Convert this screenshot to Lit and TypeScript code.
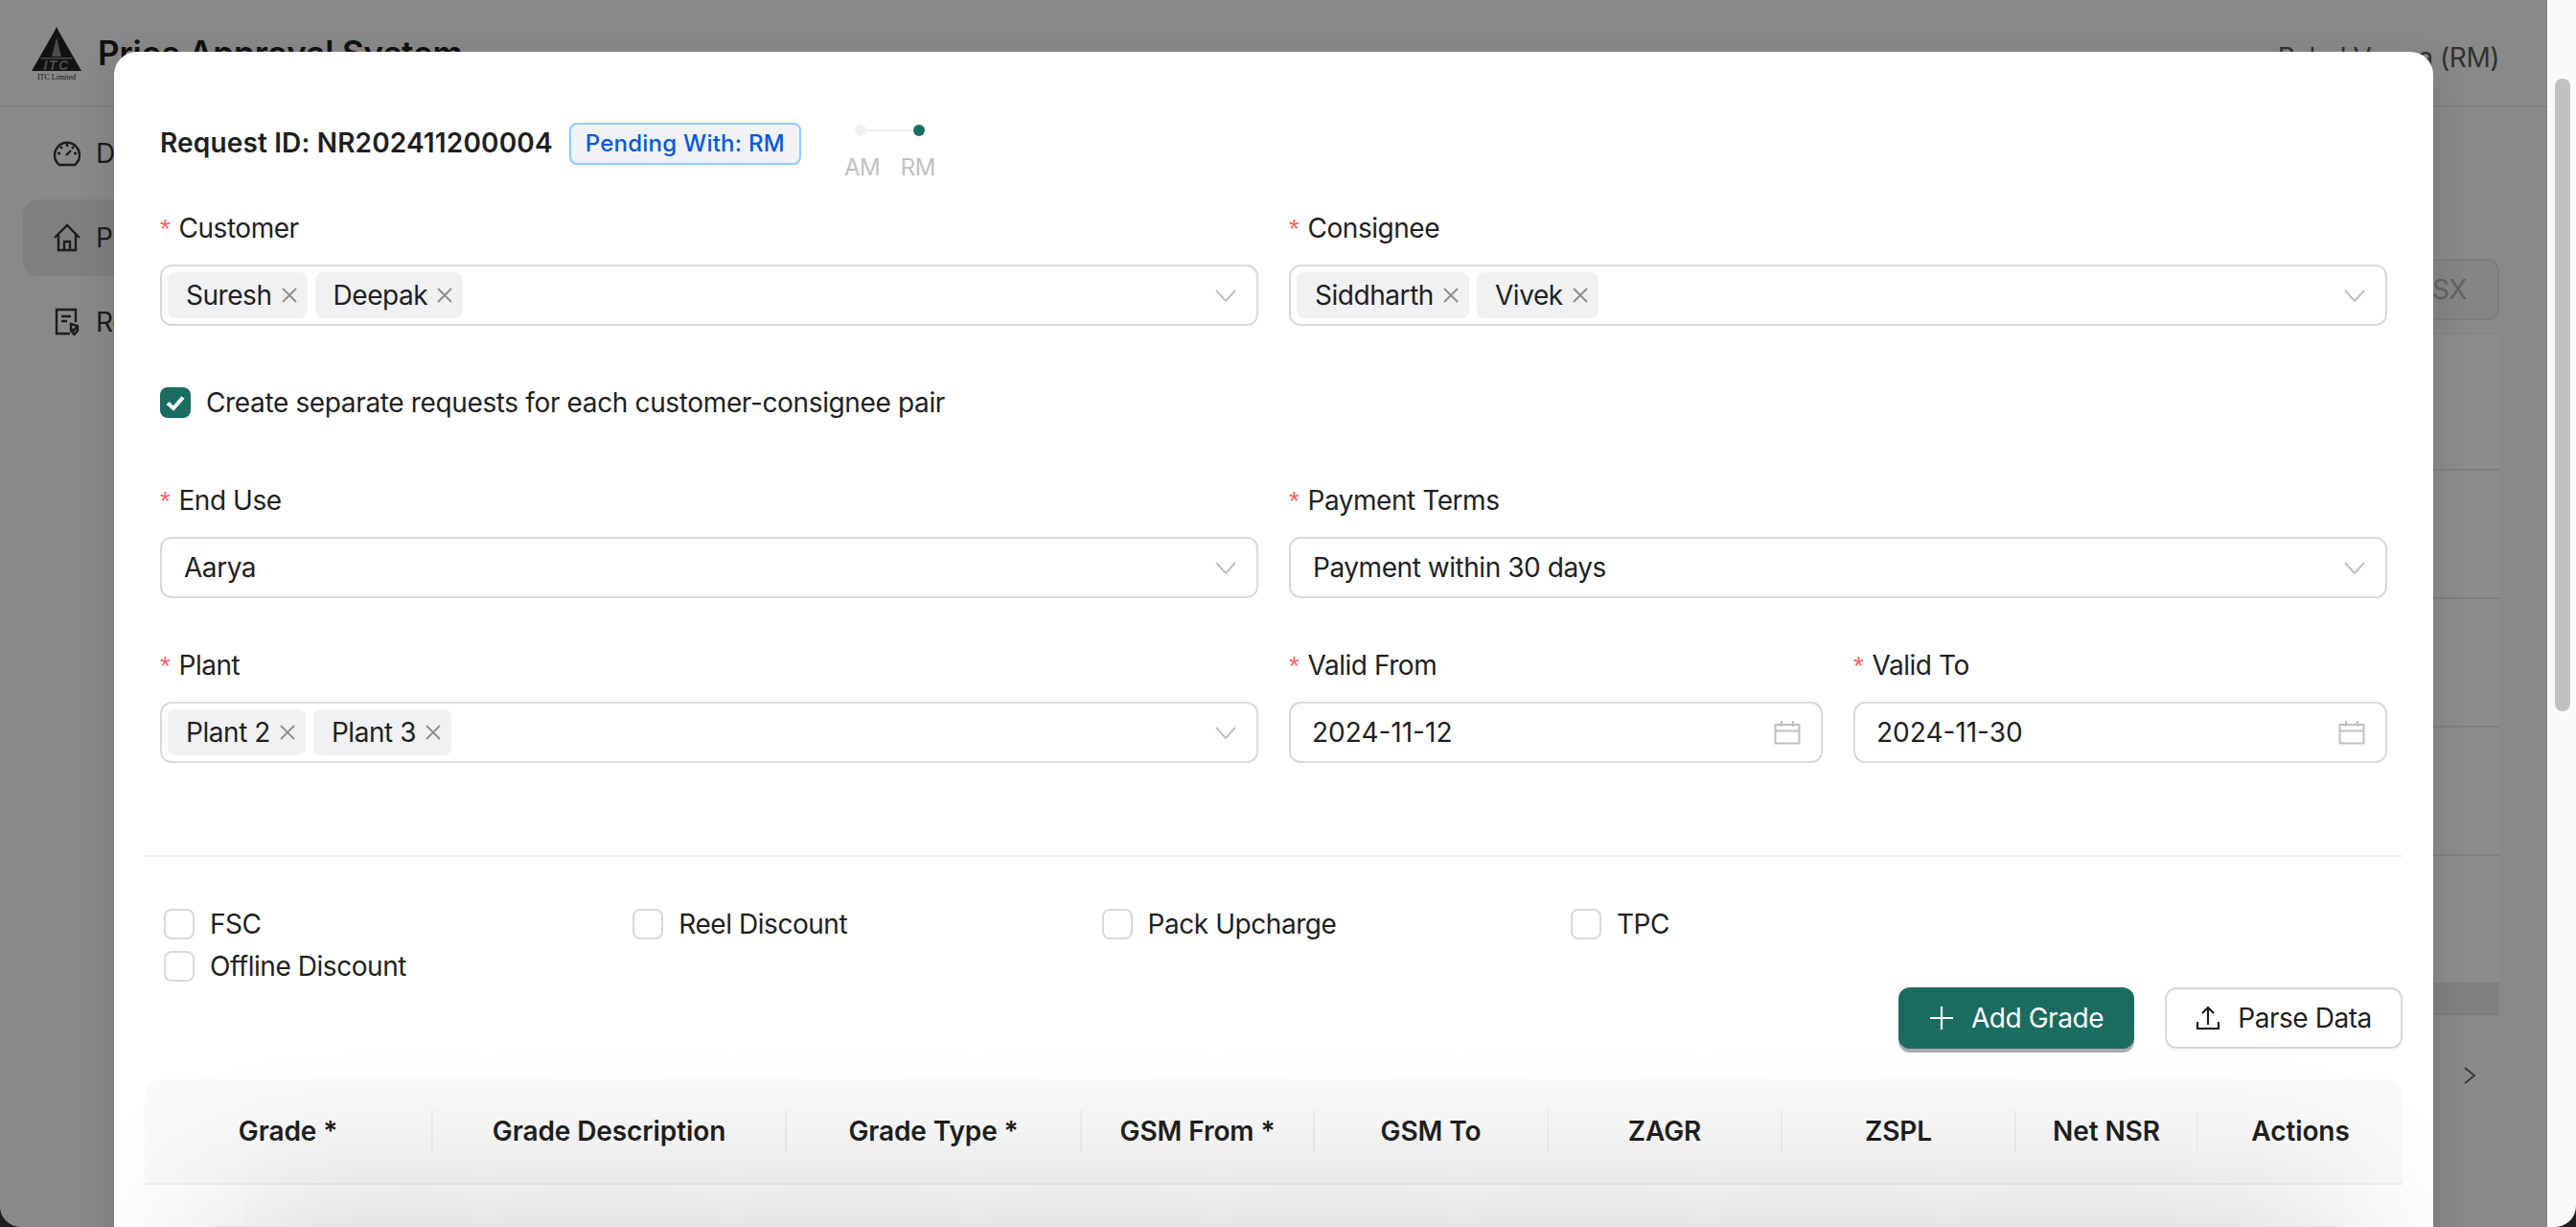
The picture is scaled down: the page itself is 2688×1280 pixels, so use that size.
import { LitElement, html, css, svg } from 'lit';
import { customElement } from 'lit/decorators.js';

const closeIcon = html`<svg class="x" viewBox="0 0 16 16"><path d="M1 1 15 15M15 1 1 15" /></svg>`;
const chevron = html`<svg class="chev" viewBox="0 0 22 13"><path d="M1 1 11 12 21 1" /></svg>`;
const calendar = html`<svg class="cal" viewBox="0 0 28 26"><path d="M1.5 5h25v19.500h-25zM1.500 11.500h25M8 1v6M20 1v6" /></svg>`;
const columns = ['Grade *', 'Grade Description', 'Grade Type *', 'GSM From *', 'GSM To', 'ZAGR', 'ZSPL', 'Net NSR', 'Actions'];
const options = ['FSC', 'Reel Discount', 'Pack Upcharge', 'TPC', 'Offline Discount'];

@customElement('app-root')
export class AppRoot extends LitElement {
  static styles = css`
    :host {
      display: block;
      width: 2688px;
      height: 1280px;
      background: #1f1f1f;
      font-family: Inter, 'Liberation Sans', sans-serif;
      font-size: 28px;
      letter-spacing: -0.45px;
      color: #1f1f1f;
    }
    .window {
      display: flex;
      height: 1280px;
      overflow: hidden;
      border-radius: 0 0 22px 22px;
    }
    .page {
      position: relative;
      flex: 1;
      overflow: hidden;
      background: #fafafa;
    }
    .scrollbar {
      width: 30px;
      box-sizing: border-box;
      padding: 82px 6px 0 8px;
      background: #fafafa;
    }
    .thumb {
      height: 660px;
      border-radius: 8px;
      background: #c1c1c1;
    }

    /* page behind the modal */
    .top {
      display: flex;
      align-items: center;
      height: 112px;
      box-sizing: border-box;
      padding: 0 50px 0 33px;
      border-bottom: 2px solid #e8e8e8;
    }
    .logo {
      width: 52px;
      height: 56px;
      margin: 2px 17px 0 0;
    }
    .app-title {
      flex: 1;
      font-size: 35px;
      font-weight: 600;
      letter-spacing: -0.150px;
      line-height: 44px;
    }
    .user {
      margin-top: 10px;
      color: #595959;
    }
    .under {
      display: flex;
    }
    .menu {
      display: flex;
      flex-direction: column;
      gap: 8px;
      width: 420px;
      box-sizing: border-box;
      padding: 8px 24px;
    }
    .menu-item {
      display: flex;
      align-items: center;
      gap: 16px;
      height: 80px;
      padding-left: 32px;
      border-radius: 16px;
      color: #333;
    }
    .menu-item.on {
      background: #e8e8e8;
    }
    .menu-item svg {
      width: 28px;
      height: 30px;
      fill: none;
      stroke: #333;
      stroke-width: 2.400;
    }
    .main {
      flex: 1;
      padding: 158px 50px 0 0;
    }
    .export-row {
      display: flex;
      justify-content: flex-end;
    }
    .export {
      height: 64px;
      width: 300px;
      box-sizing: border-box;
      border: 2px solid #e4e4e4;
      border-radius: 12px;
      background: #f2f2f2;
      color: #b4b4b4;
      line-height: 60px;
      text-align: right;
      white-space: nowrap;
      padding-right: 32px;
    }
    .bg-table {
      margin-top: 13px;
      background: #fff;
      border-top: 2px solid #f2f2f2;
    }
    .bg-row {
      height: 132px;
      border-bottom: 2px solid #e8e8e8;
    }
    .bg-row.head {
      height: 140px;
    }
    .bg-scroll {
      height: 30px;
      background: #ececec;
      border-bottom: 2px solid #e0e0e0;
    }
    .pager {
      display: flex;
      justify-content: flex-end;
      padding: 53px 24px 0 0;
    }
    .pager svg {
      width: 14px;
      height: 20px;
      fill: none;
      stroke: #666;
      stroke-width: 2;
    }

    .mask {
      position: absolute;
      inset: 0;
      background: rgba(0, 0, 0, 0.45);
    }

    /* modal */
    .modal {
      position: absolute;
      left: 119px;
      top: 54px;
      width: 2420px;
      height: 1400px;
      box-sizing: border-box;
      padding: 74px 32px 0;
      overflow: hidden;
      border-radius: 24px 24px 0 0;
      background: #fff;
    }
    .modal-shadow {
      position: absolute;
      left: 119px;
      top: 54px;
      width: 2420px;
      height: 1400px;
      border-radius: 24px;
      box-shadow: 0 12px 32px 8px rgba(0, 0, 0, 0.09);
    }
    .form {
      padding: 0 16px;
    }
    .head {
      display: flex;
      align-items: flex-start;
      height: 88px;
    }
    .req {
      font-weight: 600;
      letter-spacing: 0.150px;
      line-height: 42px;
    }
    .status {
      height: 44px;
      box-sizing: border-box;
      margin-left: 17px;
      padding: 0 15px;
      border: 2px solid #91caff;
      border-radius: 8px;
      background: #f0f2f5;
      color: #0958d9;
      font-size: 24px;
      font-weight: 500;
      letter-spacing: 0.250px;
      line-height: 40px;
    }
    .stepper {
      display: flex;
      flex-direction: column;
      align-items: center;
      width: 95px;
      margin-left: 45px;
    }
    .track {
      display: flex;
      align-items: center;
      width: 73px;
      margin-top: 2px;
    }
    .dot {
      width: 12px;
      height: 12px;
      border-radius: 50%;
      background: #f0f0f0;
    }
    .dot.on {
      background: #1a6b60;
    }
    .line {
      flex: 1;
      height: 2px;
      background: #f0f0f0;
    }
    .step-labels {
      display: flex;
      justify-content: space-between;
      width: 95px;
      margin-top: 16px;
      color: #bfbfbf;
      font-size: 24px;
      line-height: 34px;
    }
    .grid2 {
      display: grid;
      grid-template-columns: 1fr 1fr;
      gap: 32px;
      margin-bottom: 48px;
    }
    .nested {
      margin-bottom: 0;
    }
    .grid2 > * {
      min-width: 0;
    }
    label {
      display: block;
      height: 44px;
      margin-bottom: 16px;
      line-height: 44px;
    }
    label b {
      margin-right: 9px;
      color: #ff6166;
      font-family: 'Liberation Sans', sans-serif;
      font-weight: 400;
      font-size: 28px;
    }
    .input {
      display: flex;
      align-items: center;
      height: 64px;
      box-sizing: border-box;
      border: 2px solid #d9d9d9;
      border-radius: 12px;
      padding: 0 21px 0 23px;
      background: #fff;
    }
    .input.tags {
      gap: 8px;
      padding-left: 6px;
    }
    .value {
      flex: 1;
    }
    .value.date {
      letter-spacing: 0;
      margin-left: -1px;
    }
    .tag {
      display: flex;
      align-items: center;
      gap: 10px;
      height: 48px;
      padding: 0 11px 0 19px;
      border-radius: 8px;
      background: #f0f1f3;
    }
    .spacer {
      flex: 1;
    }
    .x {
      width: 16px;
      height: 16px;
      fill: none;
      stroke: #8c8c8c;
      stroke-width: 1.800;
    }
    .chev {
      width: 22px;
      height: 13px;
      fill: none;
      stroke: #bfbfbf;
      stroke-width: 2;
    }
    .cal {
      width: 28px;
      height: 26px;
      fill: none;
      stroke: #bfbfbf;
      stroke-width: 2;
    }
    .pair {
      display: flex;
      align-items: center;
      gap: 16px;
      height: 32px;
      margin: 64px 0;
      letter-spacing: -0.360px;
    }
    .box {
      flex: none;
      width: 32px;
      height: 32px;
      box-sizing: border-box;
      border: 2px solid #d9d9d9;
      border-radius: 8px;
      background: #fff;
    }
    .box.on {
      border: 0;
      background: #1a6b60;
    }
    .box svg {
      display: block;
      width: 32px;
      height: 32px;
      fill: none;
      stroke: #fff;
      stroke-width: 4;
    }
    .divider {
      height: 2px;
      margin-top: 96px;
      background: #f0f0f0;
    }
    .checks {
      display: grid;
      grid-template-columns: repeat(4, 489.300px);
      row-gap: 12px;
      margin-top: 54px;
      padding-left: 20px;
    }
    .check {
      display: flex;
      align-items: center;
      gap: 16px;
      height: 32px;
    }
    .actions {
      display: flex;
      justify-content: flex-end;
      gap: 32px;
      margin-top: 6px;
    }
    .btn {
      display: flex;
      align-items: center;
      justify-content: center;
      gap: 18px;
      height: 64px;
      box-sizing: border-box;
      border: 2px solid #d9d9d9;
      border-radius: 12px;
      background: #fff;
      box-shadow: 0 4px 0 rgba(0, 0, 0, 0.02);
    }
    .btn.primary {
      width: 246px;
      border: 0;
      background: #1a6b60;
      color: #fff;
      box-shadow: 0 4px 0 rgba(0, 0, 0, 0.33);
    }
    .btn.plain {
      width: 248px;
    }
    .btn svg {
      width: 26px;
      height: 26px;
      fill: none;
      stroke: currentColor;
      stroke-width: 2.200;
    }
    .thead {
      display: grid;
      grid-template-columns: 301px 369px 308px 243px 244px 244px 244px 190px 213px;
      align-items: center;
      height: 110px;
      box-sizing: border-box;
      margin-top: 32px;
      border-bottom: 2px solid #f0f0f0;
      border-radius: 16px 16px 0 0;
      background: #fafafa;
      font-weight: 600;
      letter-spacing: -0.100px;
    }
    .th {
      display: flex;
      align-items: center;
      justify-content: center;
      height: 44px;
      border-right: 2px solid #f0f0f0;
    }
    .th:last-child {
      border-right: 0;
    }
    .popup {
      position: absolute;
      left: 106px;
      top: 1225px;
      width: 2215px;
      height: 200px;
      background: #e6e6e6;
      box-shadow: 0 0 180px rgba(0, 0, 0, 0.24);
    }
  `;

  private tags(items: string[]) {
    return html`<div class="input tags">
      ${items.map((t) => html`<span class="tag">${t}${closeIcon}</span>`)}
      <span class="spacer"></span>${chevron}
    </div>`;
  }

  private field(name: string, body: unknown) {
    return html`<div><label><b>*</b>${name}</label>${body}</div>`;
  }

  private select(value: string) {
    return html`<div class="input"><span class="value">${value}</span>${chevron}</div>`;
  }

  private date(value: string) {
    return html`<div class="input"><span class="value date">${value}</span>${calendar}</div>`;
  }

  private logo() {
    return html`<svg class="logo" viewBox="0 0 52 56">
      <path fill="#222" d="M26 0 29 6 52 46H0L23 6Z" />
      <path fill="#8a8a8a" d="M26 11 31 31H21Z" />
      <path fill="#8a8a8a" d="M10 32H42L43 33.500H9Z" />
      <text x="26" y="45" text-anchor="middle" font-family="Liberation Sans" font-size="14" font-weight="700" font-style="italic" letter-spacing="1.500" fill="#8a8a8a">ITC</text>
      <text x="26" y="55" text-anchor="middle" font-family="Liberation Serif" font-size="8" letter-spacing="0" fill="#222">ITC Limited</text>
    </svg>`;
  }

  private menuIcon(kind: string) {
    const paths: Record<string, ReturnType<typeof svg>> = {
      gauge: svg`<path d="M6 27A13 13 0 1 1 22 27ZM14 4v4M4 15h3M21 15h3M7 8l2 2M21 8l-2 2M13 17l5-5" />`,
      home: svg`<path d="M1 15 14 2l13 13M5 12v16h18V12M11 28v-9h6v9" />`,
      report: svg`<path d="M17 27H3V2h20v13M8 9h10M8 14h6M18 17l7 2v5l-3.500 4-3.500-4zM19 22l2 2 3-4" />`,
    };
    return html`<svg viewBox="0 0 28 30">${paths[kind]}</svg>`;
  }

  render() {
    return html`
      <div class="window">
        <div class="page">
          <div class="top">
            ${this.logo()}
            <span class="app-title">Price Approval System</span>
            <span class="user">Rahul Verma (RM)</span>
          </div>
          <div class="under">
            <div class="menu">
              <div class="menu-item">${this.menuIcon('gauge')}Dashboard</div>
              <div class="menu-item on">${this.menuIcon('home')}Price Requests</div>
              <div class="menu-item">${this.menuIcon('report')}Reports</div>
            </div>
            <div class="main">
              <div class="export-row"><span class="export">Export XLSX</span></div>
              <div class="bg-table">
                <div class="bg-row head"></div>
                <div class="bg-row"></div>
                <div class="bg-row"></div>
                <div class="bg-row"></div>
                <div class="bg-row"></div>
                <div class="bg-scroll"></div>
              </div>
              <div class="pager"><svg viewBox="0 0 14 20"><path d="M2 2 12 10 2 18" /></svg></div>
            </div>
          </div>
          <div class="mask"></div>
          <div class="modal-shadow"></div>
          <div class="modal">
            <div class="form">
              <div class="head">
                <span class="req">Request ID: NR202411200004</span>
                <span class="status">Pending With: RM</span>
                <div class="stepper">
                  <div class="track"><span class="dot"></span><span class="line"></span><span class="dot on"></span></div>
                  <div class="step-labels"><span>AM</span><span>RM</span></div>
                </div>
              </div>
              <div class="grid2">
                ${this.field('Customer', this.tags(['Suresh', 'Deepak']))}
                ${this.field('Consignee', this.tags(['Siddharth', 'Vivek']))}
              </div>
              <div class="pair">
                <span class="box on"><svg viewBox="0 0 32 32"><path d="M8 16.500 14 22 24 10.500" /></svg></span>
                Create separate requests for each customer-consignee pair
              </div>
              <div class="grid2">
                ${this.field('End Use', this.select('Aarya'))}
                ${this.field('Payment Terms', this.select('Payment within 30 days'))}
              </div>
              <div class="grid2">
                ${this.field('Plant', this.tags(['Plant 2', 'Plant 3']))}
                <div class="grid2 nested">
                  ${this.field('Valid From', this.date('2024-11-12'))}
                  ${this.field('Valid To', this.date('2024-11-30'))}
                </div>
              </div>
            </div>
            <div class="divider"></div>
            <div class="checks">
              ${options.map((o) => html`<div class="check"><span class="box"></span>${o}</div>`)}
            </div>
            <div class="actions">
              <div class="btn primary">
                <svg viewBox="0 0 26 26"><path d="M13 1v24M1 13h24" /></svg>Add Grade
              </div>
              <div class="btn plain">
                <svg viewBox="0 0 26 26"><path d="M13 20V3M7 8l6-6 6 6M2 17v7h22v-7" /></svg>Parse Data
              </div>
            </div>
            <div class="thead">
              ${columns.map((c) => html`<div class="th">${c}</div>`)}
            </div>
            <div class="popup"></div>
          </div>
        </div>
        <div class="scrollbar"><div class="thumb"></div></div>
      </div>
    `;
  }
}
